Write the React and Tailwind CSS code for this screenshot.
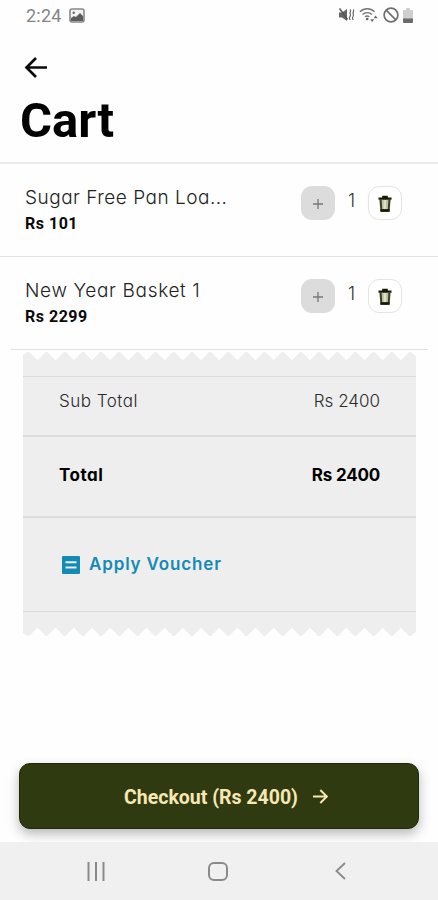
import React from "react";

const PERIOD = 18.17;

function Zigzag({ flip }) {
  const points = ["0,24", "0,3"];
  for (let i = 0; i < 22; i++) {
    const peak = 5.4 + i * PERIOD;
    points.push(`${peak - 0.8},0`, `${peak + 0.8},0`);
    if (i < 21) points.push(`${peak + PERIOD / 2},8.2`);
  }
  points.push("393,4", "393,24");
  return (
    <svg width="393" height="24" viewBox="0 0 393 24" className={flip ? "block -scale-y-100" : "block"}>
      <polygon points={points.join(" ")} fill="#eeeeee" />
    </svg>
  );
}

function Trash() {
  return (
    <svg width="14" height="18" viewBox="0 0 14 18" className="mt-[2px]">
      <path d="M4.2 2.4V.8h5.6v1.600h3.700v2.400H.5V2.400z" fill="#141a05" />
      <path d="M1.400 4.500h11.200l-1.100 12.200h-9z" fill="#3a4020" />
      <path d="M3.600 5h6.800l-.6 9.200H4.200z" fill="#b9bd9c" />
      <path d="M5.600 5h2.600v9.200H5.600z" fill="#dedfc9" />
      <path d="M2.300 14.200h9.400l-.2 2.500h-9z" fill="#141a05" />
    </svg>
  );
}

function CartRow({ name, price, nameClass, priceClass }) {
  return (
    <div className="flex h-[93px] items-start justify-between pl-[25px] pr-[36px]">
      <div className="whitespace-nowrap pt-[21px]">
        <div className={`h-[26px] text-[19px] font-light leading-[26px] text-[#222] ${nameClass}`}>{name}</div>
        <div className={`h-[24px] font-['Roboto',sans-serif] text-[16px] font-bold leading-[26px] text-[#0a0a0a] ${priceClass}`}>{price}</div>
      </div>
      <div className="flex pt-[22px]">
        <div className="flex size-[34px] items-center justify-center rounded-[11px] bg-[#dcdcdc] pr-[1px] pt-[2px]">
          <svg width="12" height="12" viewBox="0 0 12 12" stroke="#777" strokeWidth="1.300">
            <path d="M6 1v10M1 6h10" />
          </svg>
        </div>
        <div className="w-[33px] text-center text-[18px] font-light leading-[29px] text-[#333]">1</div>
        <div className="flex size-[34px] items-center justify-center rounded-[11px] border border-[#e4e4e4] bg-white">
          <Trash />
        </div>
      </div>
    </div>
  );
}

export default function App() {
  return (
    <div className="flex h-[900px] w-[438px] flex-col overflow-hidden bg-[#fefefe] font-['Inter',sans-serif] [font-feature-settings:'cv11','calt'_0]">
      <div className="flex h-[32px] items-center justify-between pl-[26px] pr-[25px]">
        <div className="flex items-center gap-[7px]">
          <span className="font-['Roboto',sans-serif] text-[18px] leading-[32px] tracking-[0.2px] text-[#858585]">2:24</span>
          <svg width="16" height="15" viewBox="0 0 16 15" className="-mt-[2px]">
            <rect x="1" y="1" width="14" height="13" rx="2" fill="#f2f2f2" stroke="#888" strokeWidth="1.600" />
            <path d="M2 13v-3l3-2 2 1 4-4 3 3v5z" fill="#5c5c5c" />
            <circle cx="4.700" cy="4.800" r="1.200" fill="#666" />
          </svg>
        </div>
        <div className="flex items-center gap-[4.500px] pb-[2px]">
          <svg width="17" height="16" viewBox="0 0 17 16" fill="none" stroke="#666" strokeWidth="1.500">
            <path d="M1 5.500h3L9 2v12l-5-3.500H1z" fill="#666" stroke="none" />
            <path d="M1.500 1.500l8 11" stroke="#555" />
            <path d="M12 2.500c1.500 1 0 2.500 0 3.500s1.500 2 0 3.500 0 2.500 0 3.500M15.300 2.500c1.200 1-.3 2.500-.3 3.500s1.200 2 0 3.500 0 2.500 0 3.500" strokeWidth="1.200" />
          </svg>
          <svg width="19" height="16" viewBox="0 0 19 16" fill="none" stroke="#777" strokeWidth="1.400">
            <path d="M1 4.800c4-4 10.500-4 14.500 0M3.500 7.600c2.700-2.700 6.800-2.700 9.500 0M6 9.800c1.400-1.100 3-1.100 4.400 0" />
            <circle cx="8.200" cy="12" r="1.300" fill="#666" stroke="none" />
            <path d="M11.200 12.300h4l-2 2.700zM14.600 11.300h4l-2-2.700z" fill="#666" stroke="none" />
          </svg>
          <svg width="16" height="16" viewBox="0 0 16 16" fill="none" stroke="#707070" strokeWidth="1.700">
            <circle cx="8" cy="8" r="6.900" />
            <path d="M3.200 3.200l9.600 9.600" />
          </svg>
          <svg width="10" height="15" viewBox="0 0 10 15">
            <path d="M3 0h4v2h2a1 1 0 011 1v11a1 1 0 01-1 1H1a1 1 0 01-1-1V3a1 1 0 011-1h2z" fill="#cfcfcf" />
            <path d="M0 10.500h10V14a1 1 0 01-1 1H1a1 1 0 01-1-1z" fill="#6b6b6b" />
          </svg>
        </div>
      </div>

      <header className="h-[132px] border-b-2 border-[#ececec]">
        <svg width="24" height="22" viewBox="0 0 24 22" fill="none" stroke="#0a0a0a" strokeWidth="2.700" className="ml-[24px] mt-[25px] block">
          <path d="M23 10.500H3M12 1L2.500 10.500 12 20" />
        </svg>
        <h1 className="ml-[20px] mt-[10px] h-[64px] font-['Roboto',sans-serif] text-[49px] font-bold leading-[64px] text-black">Cart</h1>
      </header>

      <CartRow name="Sugar Free Pan Loa..." price="Rs 101" nameClass="tracking-[0.500px]" priceClass="tracking-[0.500px]" />
      <div className="-mt-px h-px shrink-0 bg-[#e2e2e2]" />
      <CartRow name="New Year Basket 1" price="Rs 2299" nameClass="tracking-[0.650px]" priceClass="tracking-[0.500px]" />
      <div className="-mt-px ml-[11px] mr-[10px] h-px shrink-0 bg-[#e2e2e2]" />

      <section className="ml-[23px] mt-[2px] flex w-[393px] flex-col">
        <Zigzag />
        <div className="h-[236px] border-t border-[#dcdcdc] bg-[#eeeeee]">
          <div className="flex h-[60px] items-center justify-between border-b-2 border-[#dcdcdc] pb-[8px] pl-[36px] pr-[36px] text-[17px] font-light text-[#2a2a2a]">
            <span className="tracking-[0.500px]">Sub Total</span>
            <span>Rs 2400</span>
          </div>
          <div className="flex h-[81px] items-center justify-between border-b-2 border-[#dcdcdc] pb-[1px] pl-[36px] pr-[36px] text-[17px] font-bold text-black">
            <span className="tracking-[0.500px]">Total</span>
            <span className="tracking-[-0.200px]">Rs 2400</span>
          </div>
          <div className="flex h-[94px] items-center border-b border-[#dcdcdc] pl-[39px] text-[17px] font-semibold text-[#138bb5]">
            <svg width="18" height="18" viewBox="0 0 18 18" className="mr-[9px]">
              <rect width="18" height="18" rx="1" fill="#138bb5" />
              <path d="M3.500 6.300h11M3.500 11.600h11" stroke="#eeeeee" strokeWidth="2" />
            </svg>
            <span className="tracking-[0.850px]">Apply Voucher</span>
          </div>
        </div>
        <Zigzag flip />
      </section>

      <div className="mt-auto px-[19px] pb-[13px]">
        <button className="flex h-[66px] w-full items-center justify-center rounded-[11px] border border-[#1d2b08] bg-[#303a10] pl-[14px] pt-[3px] font-['Roboto',sans-serif] text-[19.500px] font-bold text-[#f6e7b4] shadow-[0_5px_12px_rgba(0,0,0,0.28)]">
          <span>Checkout (Rs 2400)</span>
          <svg width="15" height="15" viewBox="0 0 15 15" fill="none" stroke="#f6e7b4" strokeWidth="1.900" className="-mt-[2px] ml-[15px]">
            <path d="M0 7.500h13.500M7.300 1l6.500 6.500L7.300 14" />
          </svg>
        </button>
      </div>

      <nav className="flex h-[58px] shrink-0 items-center bg-[#f0f0f0] pl-[87px]">
        <svg width="18" height="19" viewBox="0 0 18 19" stroke="#8a8a8a" strokeWidth="2">
          <path d="M1.500 0v19M9 0v19M16.500 0v19" />
        </svg>
        <svg width="20" height="19" viewBox="0 0 20 19" fill="none" stroke="#8a8a8a" strokeWidth="2" className="ml-[103px]">
          <rect x="1" y="1" width="18" height="17" rx="5" />
        </svg>
        <svg width="11" height="18" viewBox="0 0 11 18" fill="none" stroke="#8a8a8a" strokeWidth="1.900" className="ml-[107px]">
          <path d="M10 1L1.500 9l8.500 8" />
        </svg>
      </nav>
    </div>
  );
}
